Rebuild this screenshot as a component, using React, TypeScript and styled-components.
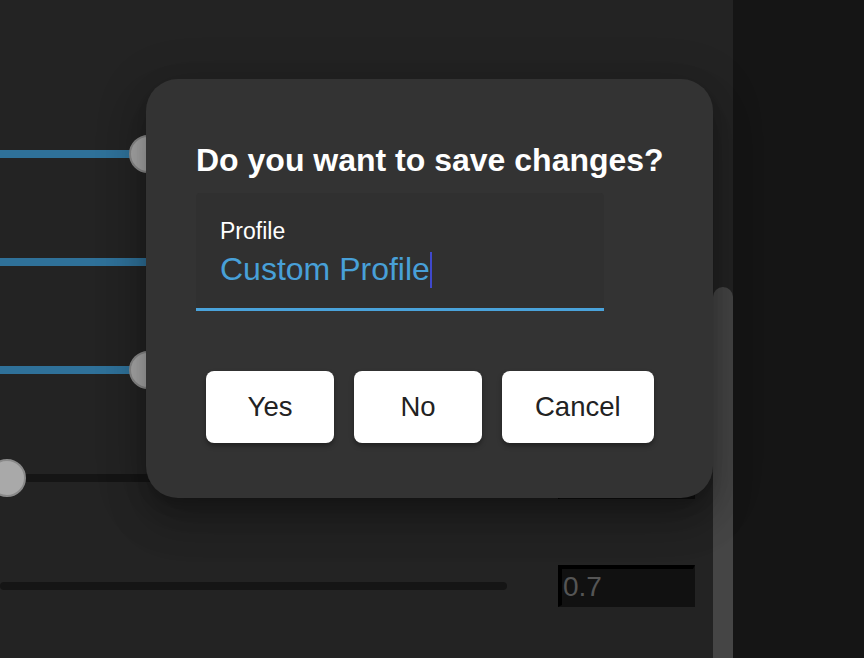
import React from "react";
import styled, { createGlobalStyle } from "styled-components";

const Global = createGlobalStyle`
  html, body { margin: 0; padding: 0; background: #151515; overflow: hidden; }
  * { box-sizing: border-box; }
  #root { font-family: "Liberation Sans", Arial, sans-serif; }
`;

const Root = styled.div`
  position: relative;
  display: flex;
  width: 864px;
  height: 658px;
  overflow: hidden;
  background: #151515;
`;

const Panel = styled.div`
  display: flex;
  width: 733px;
  height: 100%;
  background: #232323;
`;

const Content = styled.div`
  flex: 1;
  display: flex;
  flex-direction: column;
  padding-top: 100px;
`;

const Row = styled.div`
  display: grid;
  grid-template-columns: 1fr 137px;
  column-gap: 51px;
  align-items: center;
  height: 108px;
  flex-shrink: 0;
  padding-right: 18px;
`;

const Track = styled.div`
  position: relative;
  height: 8px;
  border-radius: 4px;
  background: #151515;
`;

const Fill = styled.div`
  position: absolute;
  left: 0;
  top: 0;
  bottom: 0;
  background: #2f7199;
`;

const Thumb = styled.div`
  position: absolute;
  top: 50%;
  width: 38px;
  height: 38px;
  border-radius: 50%;
  background: #a9a9a9;
  border: 2px solid #8a8a8a;
  transform: translate(-50%, -50%);
`;

const NumberBox = styled.div`
  height: 42px;
  background: #111;
  border-style: solid;
  border-width: 4px 2px 2px 4px;
  border-color: #000 #111 #111 #000;
  color: #555;
  font-size: 28px;
  line-height: 36px;
  padding-left: 1px;
`;

const Scrollbar = styled.div`
  width: 20px;
  display: flex;
  flex-direction: column;
  padding-top: 287px;
`;

const ScrollThumb = styled.div`
  flex: 1;
  background: #454545;
  border-radius: 10px 10px 0 0;
`;

const Side = styled.div`
  flex: 1;
  background: #151515;
`;

const Dialog = styled.div`
  position: absolute;
  left: 146px;
  top: 79px;
  width: 567px;
  padding: 63px 40px 55px 50px;
  background: #333333;
  border-radius: 32px;
  box-shadow: 0 11px 15px -7px rgba(0, 0, 0, 0.25),
    0 24px 38px 3px rgba(0, 0, 0, 0.18), 0 9px 46px 8px rgba(0, 0, 0, 0.16);
`;

const Title = styled.h2`
  margin: 0;
  color: #fff;
  font-size: 32px;
  line-height: 37px;
  font-weight: 700;
  white-space: nowrap;
`;

const Field = styled.div`
  margin-top: 14px;
  width: 408px;
  padding: 25px 24px 20px;
  background: #303030;
  border-radius: 4px 4px 0 0;
  border-bottom: 3px solid #4aa3db;
`;

const Label = styled.div`
  color: #fff;
  font-size: 23px;
  line-height: 26px;
`;

const Value = styled.div`
  display: flex;
  align-items: center;
  margin-top: 7px;
  color: #48a0d8;
  font-size: 32px;
  line-height: 37px;
`;

const Caret = styled.span`
  display: inline-block;
  width: 2px;
  height: 36px;
  background: #3f48cc;
`;

const Actions = styled.div`
  display: flex;
  gap: 20px;
  margin-top: 60px;
  padding-left: 10px;
`;

const Button = styled.button`
  min-width: 128px;
  height: 72px;
  padding: 0 33px;
  background: #fff;
  border: none;
  border-radius: 8px;
  color: #222;
  font-family: "Liberation Sans", Arial, sans-serif;
  font-size: 27.5px;
  box-shadow: 0 3px 5px rgba(0, 0, 0, 0.35);
`;

type SliderRow = { value: number | null; fill: boolean; text: string };

const rows: SliderRow[] = [
  { value: 148, fill: true, text: "" },
  { value: 320, fill: true, text: "" },
  { value: 148, fill: true, text: "" },
  { value: 7, fill: false, text: "" },
  { value: null, fill: false, text: "0.7" },
];

export default function App() {
  return (
    <>
      <Global />
      <Root>
        <Panel>
          <Content>
            {rows.map((r, i) => (
              <Row key={i}>
                <Track>
                  {r.fill && r.value !== null && <Fill style={{ width: r.value }} />}
                  {r.value !== null && <Thumb style={{ left: r.value }} />}
                </Track>
                <NumberBox>{r.text}</NumberBox>
              </Row>
            ))}
          </Content>
          <Scrollbar>
            <ScrollThumb />
          </Scrollbar>
        </Panel>
        <Side />
        <Dialog>
          <Title>Do you want to save changes?</Title>
          <Field>
            <Label>Profile</Label>
            <Value>
              Custom Profile
              <Caret />
            </Value>
          </Field>
          <Actions>
            <Button>Yes</Button>
            <Button>No</Button>
            <Button>Cancel</Button>
          </Actions>
        </Dialog>
      </Root>
    </>
  );
}
